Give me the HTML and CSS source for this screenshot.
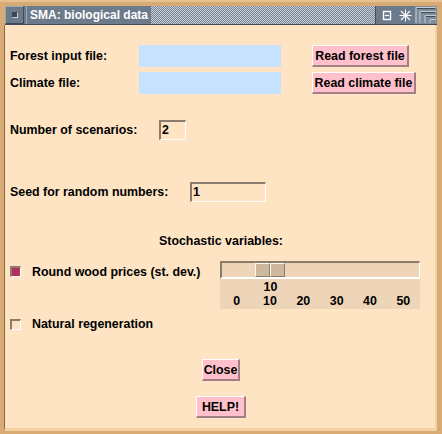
FILE: index.html
```html
<!DOCTYPE html>
<html lang="en">
<head>
  <meta charset="UTF-8">
  <title>SMA: biological data</title>
  <link rel="stylesheet" href="styles.css">
</head>
<body>

<div class="window">
  <div class="titlebar">
    <div class="menu-btn"><span class="menu-square"></span></div>
    <div class="title">
      <span class="title-text">SMA: biological data</span>
      <span class="title-fill"></span>
    </div>
    <div class="title-icons">
      <svg width="10" height="11" viewBox="0 0 10 11">
        <rect x="1.5" y="1.5" width="7" height="8" fill="none" stroke="#fff" stroke-width="1.4"/>
        <line x1="3" y1="5.5" x2="7" y2="5.5" stroke="#fff" stroke-width="1.2"/>
      </svg>
      <svg width="13" height="13" viewBox="0 0 13 13">
        <g stroke="#fff" stroke-width="1.1">
          <line x1="6.5" y1="0.5" x2="6.5" y2="12.5"/>
          <line x1="0.5" y1="6.5" x2="12.5" y2="6.5"/>
          <line x1="2" y1="2" x2="11" y2="11"/>
          <line x1="11" y1="2" x2="2" y2="11"/>
        </g>
      </svg>
    </div>
    <div class="corner">
      <svg width="22" height="18" viewBox="0 0 22 18">
        <path d="M1 1.5H21M1 1.5V17M5 5.5H21M5 5.5V17M10 9.5H21M10 9.5V17M15 13.5H21M15 13.5V17" stroke="#c3ccd6" stroke-width="1" fill="none"/>
        <path d="M2 2.5H20M6 6.5H20M11 10.5H20" stroke="#3f4a56" stroke-width="1" fill="none"/>
      </svg>
    </div>
  </div>

  <div class="content">
    <div class="row row-file first">
      <label class="lbl w-file">Forest input file:</label>
      <span class="entry-blue"></span>
      <button class="btn btn-forest">Read forest file</button>
    </div>
    <div class="row row-file second">
      <label class="lbl w-file">Climate file:</label>
      <span class="entry-blue"></span>
      <button class="btn btn-climate">Read climate file</button>
    </div>

    <div class="row row-num scenarios">
      <label class="lbl w-scen">Number of scenarios:</label>
      <span class="entry-sunken e-scen">2</span>
    </div>

    <div class="row row-num seed">
      <label class="lbl w-seed">Seed for random numbers:</label>
      <span class="entry-sunken e-seed">1</span>
    </div>

    <div class="heading">Stochastic variables:</div>

    <div class="row row-scale">
      <div class="check-item w-check">
        <span class="check on"></span>
        <span class="lbl">Round wood prices (st. dev.)</span>
      </div>
      <div class="scale">
        <div class="trough">
          <div class="thumb"><span></span><span></span></div>
        </div>
        <div class="scale-value">10</div>
        <div class="ticks">
          <span>0</span><span>10</span><span>20</span><span>30</span><span>40</span><span>50</span>
        </div>
      </div>
    </div>

    <div class="row check-item natural">
      <span class="check"></span>
      <span class="lbl">Natural regeneration</span>
    </div>

    <div class="bottom-buttons">
      <button class="btn btn-close">Close</button>
      <button class="btn btn-help">HELP!</button>
    </div>
  </div>
</div>

</body>
</html>
```

FILE: styles.css
```css
html, body {
  margin: 0;
  padding: 0;
}
body {
  width: 442px;
  height: 434px;
  background: #d8aa74;
  font-family: "Liberation Sans", Arial, sans-serif;
  font-weight: bold;
  font-size: 12.4px;
  color: #000;
  overflow: hidden;
}

.window {
  padding: 6px 5px 3px 4px;
  height: 434px;
  box-sizing: border-box;
  border-top: 2px solid #e6c290;
  display: flex;
  flex-direction: column;
}

/* title bar */
.titlebar {
  display: flex;
  height: 18px;
  margin-top: -2px;
  margin-left: 1px;
  background: #6c7b8b;
  border-bottom: 1px solid #414b56;
}
.menu-btn {
  width: 17px;
  border: 1px solid;
  border-color: #9aa7b5 #414b56 #414b56 #9aa7b5;
  display: flex;
  align-items: center;
  justify-content: center;
}
.menu-square {
  width: 4px;
  height: 4px;
  background: #3c4652;
  border: 1px solid;
  border-color: #3c4652 #d0d6dc #d0d6dc #3c4652;
}
.title {
  flex: 1;
  display: flex;
  align-items: stretch;
  margin-left: 2px;
  border-left: 1px solid #9aa7b5;
}
.title-text {
  color: #fff;
  padding: 0 3px 0 3px;
  line-height: 18px;
  font-size: 12px;
}
.title-fill {
  flex: 1;
  background-image: repeating-conic-gradient(#c6ccd3 0 25%, #7b8796 0 50%);
  background-size: 2px 2px;
}
.title-icons {
  width: 37px;
  display: flex;
  align-items: center;
  justify-content: space-around;
  padding-left: 2px;
  border-left: 1px solid #414b56;
}
.corner {
  width: 22px;
  background: #7d8b9a;
}
.corner svg { display: block; }

/* main area */
.content {
  flex: 1;
  background: #ffe4c4;
  border-left: 1px solid #8c6846;
  border-right: 2px solid #f3d1a4;
  border-bottom: 3px solid #f3d1a4;
  padding-left: 5px;
}

.row {
  display: flex;
  align-items: center;
}
.lbl { white-space: nowrap; }

.row-file { height: 22px; }
.row-file.first { margin-top: 20px; }
.row-file.second { margin-top: 5px; }
.w-file { width: 129px; }
.entry-blue {
  width: 142px;
  height: 22px;
  background: #c6e2ff;
}

.btn {
  height: 22px;
  background: #ffc0cb;
  border-style: solid;
  border-width: 1px 2px 2px 1px;
  border-color: #fff #a27f82 #a27f82 #fff;
  font: bold 12.4px "Liberation Sans", Arial, sans-serif;
  color: #000;
  padding: 0;
  text-align: center;
}
.btn-forest { width: 97px; margin-left: 31px; }
.btn-climate { width: 104px; margin-left: 31px; }

.row-num { height: 20px; }
.scenarios { margin-top: 26px; }
.seed { margin-top: 42px; }
.w-scen { width: 149px; }
.w-seed { width: 180px; }
.entry-sunken {
  height: 20px;
  box-sizing: border-box;
  border-style: solid;
  border-width: 2px 1px 1px 2px;
  border-color: #8b7d6b #fff #fff #8b7d6b;
  padding-left: 1px;
  line-height: 17px;
}
.e-scen { width: 27px; }
.e-seed { width: 76px; }

.heading {
  margin-top: 31px;
  height: 16px;
  line-height: 16px;
  text-align: center;
  padding-right: 3px;
}

.row-scale {
  margin-top: 12px;
  align-items: flex-start;
}
.check-item {
  display: flex;
  align-items: center;
}
.w-check {
  width: 210px;
  height: 21px;
}
.check {
  width: 11px;
  height: 11px;
  box-sizing: border-box;
  border-style: solid;
  border-width: 2px 1px 1px 2px;
  border-color: #8b7d6b #fff #fff #8b7d6b;
  background: #ffe4c4;
  margin-right: 11px;
}
.check.on { background: #b03060; }

.scale {
  width: 200px;
  height: 48px;
  background: #eed5b7;
}
.trough {
  height: 18px;
  box-sizing: border-box;
  border-style: solid;
  border-width: 2px 1px 2px 2px;
  border-color: #8b7d6b #fff #fff #8b7d6b;
  padding-left: 33px;
}
.thumb {
  width: 30px;
  height: 14px;
  display: flex;
}
.thumb span {
  flex: 1;
  background: #cdb79e;
  border-style: solid;
  border-width: 1px 1px 1px 1px;
  border-color: #fff8ee #8b7d6b #8b7d6b #fff8ee;
}
.scale-value {
  width: 33.6px;
  margin-left: 33.6px;
  text-align: center;
  line-height: 14px;
  margin-top: 1px;
}
.ticks {
  display: flex;
  line-height: 14px;
}
.ticks span {
  width: 33.6px;
  text-align: center;
}

.natural {
  margin-top: 7px;
  height: 16px;
}

.bottom-buttons {
  display: flex;
  flex-direction: column;
  align-items: center;
  padding-right: 3px;
}
.btn-close { width: 38px; margin-top: 27px; }
.btn-help { width: 50px; margin-top: 15px; }
```
